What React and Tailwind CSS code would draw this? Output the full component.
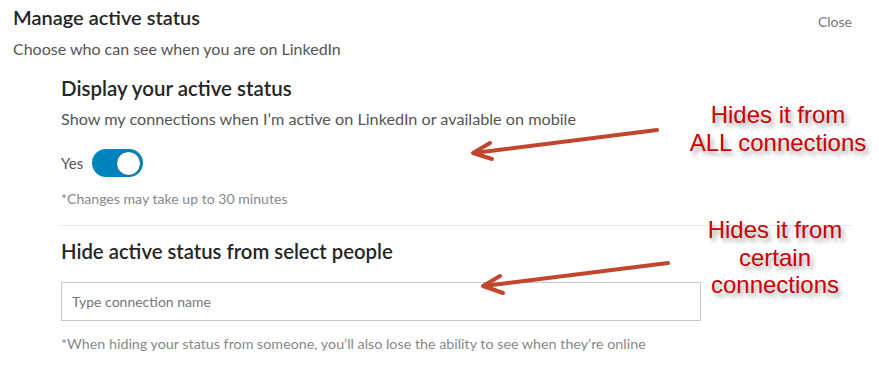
export default function App() {
  return (
    <div className="relative w-[879px] h-[375px] bg-white overflow-hidden font-['Lato',sans-serif]">
      <div className="px-[13px] pt-[5px]">
        <div className="flex justify-between items-start">
          <h1 className="text-[20px] leading-[24px] font-semibold text-[#262626]">Manage active status</h1>
          <button className="mt-[7px] mr-[14px] text-[14px] leading-[20px] text-[#777]">Close</button>
        </div>
        <p className="mt-[6px] text-[16px] leading-[22px] text-[#555]">Choose who can see when you are on LinkedIn</p>
        <div className="pl-[48px] pr-[14px]">
          <h2 className="mt-[16px] text-[20.5px] leading-[24px] font-semibold text-[#262626]">Display your active status</h2>
          <p className="mt-[8px] text-[16.2px] leading-[22px] text-[#555]">Show my connections when I’m active on LinkedIn or available on mobile</p>
          <div className="mt-[19px] flex items-center gap-[9px]">
            <span className="text-[15px] leading-[20px] text-[#555]">Yes</span>
            <div className="w-[51px] h-[28px] rounded-full bg-[#0084bf] flex items-center justify-end p-[2px]">
              <div className="w-[25px] h-[25px] rounded-full bg-white border-[1.5px] border-[#006097]" />
            </div>
          </div>
          <p className="mt-[12px] text-[14.1px] leading-[20px] text-[#888]">*Changes may take up to 30 minutes</p>
          <div className="mt-[16px] h-px bg-[#e6e6e6]" />
          <h2 className="mt-[13px] text-[20.3px] leading-[24px] font-semibold text-[#262626]">Hide active status from select people</h2>
          <div className="mt-[19px] w-[640px] h-[39px] border border-[#c8c8c8] flex items-center px-[10px]">
            <span className="text-[14px] text-[#777]">Type connection name</span>
          </div>
          <p className="mt-[13px] text-[14.3px] leading-[20px] text-[#888]">*When hiding your status from someone, you’ll also lose the ability to see when they’re online</p>
        </div>
      </div>

      <svg className="absolute left-0 top-0 pointer-events-none" width="879" height="375" viewBox="0 0 879 375">
        <g stroke="#c2462e" strokeWidth="4" strokeLinecap="round" strokeLinejoin="round" fill="none">
          <line x1="657" y1="130" x2="474" y2="153" />
          <polyline points="490,143 473,153 492,159" />
          <line x1="668" y1="263" x2="484" y2="286" />
          <polyline points="500,276 483,286 503,293" />
        </g>
      </svg>

      <div className="absolute left-[680px] top-[101px] w-[196px] text-center font-['Liberation_Sans',Arial,sans-serif] text-[24px] leading-[28px] text-[#cc0000] [text-shadow:3px_4px_4px_rgba(0,0,0,0.35)]">
        Hides it from<br />ALL connections
      </div>
      <div className="absolute left-[677px] top-[216px] w-[196px] text-center font-['Liberation_Sans',Arial,sans-serif] text-[24px] leading-[27.5px] text-[#cc0000] [text-shadow:3px_4px_4px_rgba(0,0,0,0.35)]">
        Hides it from<br />certain<br />connections
      </div>
    </div>
  );
}
